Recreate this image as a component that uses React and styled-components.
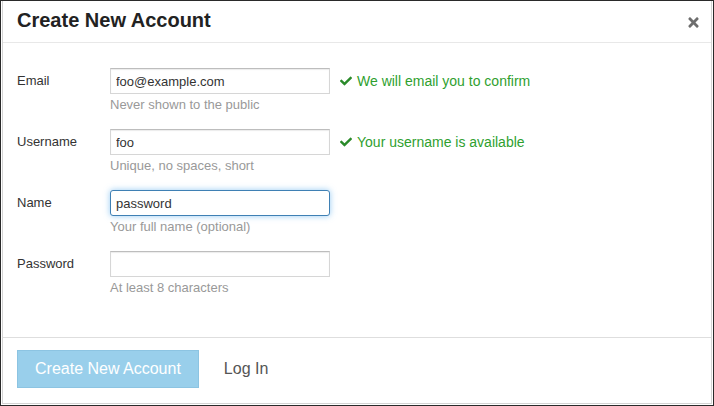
import styled, { createGlobalStyle } from "styled-components";
import { FaCheck, FaTimes } from "react-icons/fa";

const GlobalStyle = createGlobalStyle`
  html, body {
    margin: 0;
    padding: 0;
    background: #fff;
  }
  body {
    font-family: "Liberation Sans", Arial, sans-serif;
    color: #333;
  }
`;

const fields = [
  {
    label: "Email",
    value: "foo@example.com",
    help: "Never shown to the public",
    success: "We will email you to confirm",
  },
  {
    label: "Username",
    value: "foo",
    help: "Unique, no spaces, short",
    success: "Your username is available",
  },
  {
    label: "Name",
    value: "password",
    help: "Your full name (optional)",
    focused: true,
  },
  {
    label: "Password",
    value: "",
    help: "At least 8 characters",
    type: "password",
  },
];

const App = () => {
  return (
    <>
      <GlobalStyle />
      <Frame>
        <Modal>
          <Header>
            <Title>Create New Account</Title>
            <Close>
              <FaTimes size={15} />
            </Close>
          </Header>
          <Body>
            {fields.map((field) => (
              <Row key={field.label}>
                <Label>{field.label}</Label>
                <Controls>
                  <InputLine>
                    <Input
                      type={field.type || "text"}
                      defaultValue={field.value}
                      $focused={field.focused}
                      autoFocus={field.focused}
                    />
                    {field.success && (
                      <Success>
                        <FaCheck size={12} />
                        <span>{field.success}</span>
                      </Success>
                    )}
                  </InputLine>
                  <Help>{field.help}</Help>
                </Controls>
              </Row>
            ))}
          </Body>
          <Footer>
            <PrimaryButton disabled>Create New Account</PrimaryButton>
            <LinkButton>Log In</LinkButton>
          </Footer>
        </Modal>
      </Frame>
    </>
  );
};

const Frame = styled.div`
  box-sizing: border-box;
  width: 714px;
  height: 406px;
  border: 1px solid #2a2a2a;
  padding: 0 1px 1px 1px;
  display: flex;
`;

const Modal = styled.div`
  flex: 1;
  display: flex;
  flex-direction: column;
  border: 1px solid #d4d4d4;
  border-top: none;
  background: #fff;
`;

const Header = styled.div`
  height: 41px;
  display: flex;
  align-items: center;
  justify-content: space-between;
  padding: 0 10px 0 14px;
  border-bottom: 1px solid #e8e8e8;
  background: #fff;
`;

const Title = styled.h3`
  margin: 0;
  font-size: 20px;
  font-weight: bold;
  color: #222;
  position: relative;
  top: -1px;
`;

const Close = styled.span`
  display: flex;
  color: #555;
  opacity: 0.85;
  position: relative;
  top: 1px;
`;

const Body = styled.div`
  flex: 1;
  padding: 25px 14px 0 14px;
  display: flex;
  flex-direction: column;
  gap: 8px;
`;

const Row = styled.div`
  display: flex;
  height: 53px;
`;

const Label = styled.label`
  width: 93px;
  font-size: 13px;
  line-height: 26px;
  color: #333;
`;

const Controls = styled.div`
  display: flex;
  flex-direction: column;
`;

const InputLine = styled.div`
  display: flex;
  align-items: center;
  gap: 10px;
`;

const Input = styled.input`
  box-sizing: border-box;
  width: 220px;
  height: 26px;
  padding: 2px 5px;
  font-family: "Liberation Sans", Arial, sans-serif;
  font-size: 13px;
  color: #333;
  background: #fff;
  border: 1px solid ${(p) => (p.$focused ? "#3f80b4" : "#d6d6d6")};
  border-top-color: ${(p) => (p.$focused ? "#3f80b4" : "#bdbdbd")};
  border-radius: ${(p) => (p.$focused ? "3px" : "0")};
  box-shadow: ${(p) =>
    p.$focused
      ? "0 0 6px rgba(82, 168, 236, 0.6)"
      : "inset 0 1px 1px rgba(0, 0, 0, 0.08)"};
  outline: none;
`;

const Success = styled.span`
  display: flex;
  align-items: center;
  gap: 5px;
  font-size: 14px;
  color: #2f9f2f;
  svg {
    color: #2a8a2a;
  }
`;

const Help = styled.div`
  margin-top: 3px;
  font-size: 13px;
  color: #999;
  line-height: 16px;
`;

const Footer = styled.div`
  height: 66px;
  box-sizing: border-box;
  border-top: 1px solid #dedede;
  padding: 12px 14px 0 14px;
  display: flex;
  align-items: flex-start;
  gap: 25px;
  background: #fff;
`;

const PrimaryButton = styled.button`
  height: 38px;
  padding: 0 17px;
  font-family: "Liberation Sans", Arial, sans-serif;
  font-size: 16px;
  color: #fff;
  background: #99cfeb;
  border: 1px solid #8cc4e2;
  border-radius: 0;
  cursor: default;
`;

const LinkButton = styled.span`
  font-size: 16px;
  line-height: 38px;
  color: #555;
`;

export default App;
